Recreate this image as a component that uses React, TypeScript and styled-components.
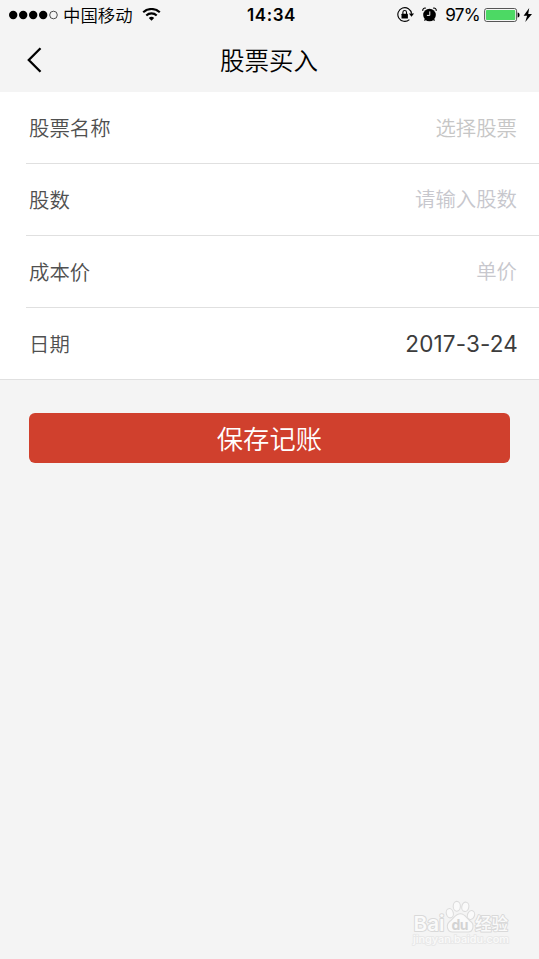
import React from "react";
import styled, { createGlobalStyle } from "styled-components";

const GlobalStyle = createGlobalStyle`
  * { box-sizing: border-box; }
  html, body { margin: 0; padding: 0; background: #f4f4f4; }
  body { font-family: Inter, "Noto Sans CJK SC", sans-serif; }
`;

const Screen = styled.main`
  position: relative;
  width: 539px;
  height: 959px;
  overflow: hidden;
  background: #f4f4f4;
`;

const StatusBar = styled.div`
  display: grid;
  grid-template-columns: 1fr auto 1fr;
  align-items: center;
  height: 30px;
  padding: 0 6px 0 9px;
  color: #000;
`;

const StatusGroup = styled.div<{ $end?: boolean }>`
  display: flex;
  align-items: center;
  height: 30px;
  justify-content: ${(p) => (p.$end ? "flex-end" : "flex-start")};
`;

const Carrier = styled.span`
  margin: 0 9px 0 4px;
  font-family: "Noto Sans CJK SC", sans-serif;
  font-size: 17.4px;
  font-weight: 350;
  line-height: 28px;
  padding-bottom: 1px;
`;

const Clock = styled.time`
  font-size: 17px;
  font-weight: 600;
  letter-spacing: 0.55px;
  line-height: 30px;
  padding-left: 1px;
`;

const Percent = styled.span`
  margin: 0 4px 0 8px;
  font-size: 17.2px;
  letter-spacing: -0.7px;
  line-height: 30px;
`;

const IconSlot = styled.span`
  display: flex;
  margin-right: 7px;
`;

const NavBar = styled.header`
  display: grid;
  grid-template-columns: 60px 1fr 60px;
  align-items: start;
  height: 62px;
`;

const BackButton = styled.button`
  display: flex;
  align-items: center;
  height: 60px;
  padding: 0 0 0 26px;
  border: 0;
  background: none;
`;

const Title = styled.h1`
  margin: 0 1px 0 0;
  font-family: "Noto Sans CJK SC", sans-serif;
  font-size: 24.5px;
  font-weight: 350;
  line-height: 60px;
  text-align: center;
  color: #000;
`;

const Form = styled.section`
  background: #fff;
  border-bottom: 1px solid #e0e0e0;
`;

const Row = styled.div`
  display: flex;
  align-items: center;
  justify-content: space-between;
  height: 72px;
  margin-left: 26px;
  padding: 0 22px 2px 3px;
  border-bottom: 1px solid #e0e0e0;
  &:last-child {
    height: 71px;
    border-bottom: 0;
  }
`;

const Label = styled.span`
  font-family: "Noto Sans CJK SC", sans-serif;
  font-size: 20.4px;
  font-weight: 350;
  line-height: 30px;
  color: #505050;
`;

const Placeholder = styled.span<{ $cool?: boolean }>`
  font-family: "Noto Sans CJK SC", sans-serif;
  font-size: 20.4px;
  font-weight: 350;
  line-height: 30px;
  padding-bottom: ${(p) => (p.$cool ? "1px" : "0")};
  color: ${(p) => (p.$cool ? "#c7c7cd" : "#c6c6c6")};
`;

const DateValue = styled.span`
  font-size: 22.5px;
  letter-spacing: 0.15px;
  line-height: 30px;
  padding-top: 2px;
  margin-right: -1px;
  color: #3c3c3c;
`;

const SaveButton = styled.button`
  display: block;
  width: 481.6px;
  height: 50px;
  margin: 33px 0 0 28.6px;
  padding: 0 0 1px;
  border: 0;
  border-radius: 6px;
  background: #d0402d;
  color: #fff;
  font-family: "Noto Sans CJK SC", sans-serif;
  font-size: 26.3px;
  font-weight: 350;
  line-height: 49px;
`;

const Watermark = styled.div`
  position: absolute;
  left: 411px;
  top: 898px;
  width: 102px;
  height: 52px;
`;

const fields = [
  { label: "股票名称", hint: "选择股票", cool: false },
  { label: "股数", hint: "请输入股数", cool: true },
  { label: "成本价", hint: "单价", cool: true },
];

const Signal = () => (
  <svg width="50" height="10" viewBox="0 0 50 10">
    {[4.2, 14.2, 24.2, 34.2].map((x) => (
      <circle key={x} cx={x} cy="5" r="4.2" />
    ))}
    <circle cx="44.5" cy="5" r="3.8" fill="none" stroke="#222" strokeWidth="0.8" />
  </svg>
);

const Wifi = () => (
  <svg width="19" height="14" viewBox="0 0 19 14" fill="none" stroke="#000" strokeWidth="2.1">
    <path d="M1.2 4.3a12 12 0 0 1 16.6 0" />
    <path d="M4.3 7.5a7.5 7.5 0 0 1 10.4 0" />
    <path d="M6.8 10.1a3.9 3.9 0 0 1 5.4 0L9.5 12.7z" fill="#000" stroke="none" />
  </svg>
);

const RotationLock = () => (
  <svg width="18" height="16" viewBox="0 0 18 16" fill="none" stroke="#000">
    <path d="M14.6 6.7A6.9 6.9 0 1 0 12.4 12.6" strokeWidth="1.1" />
    <path d="M11.9 6.4h5.2l-2.6 3.3z" fill="#000" stroke="none" />
    <rect x="4.5" y="6.8" width="6.4" height="4.8" rx="0.4" fill="#000" stroke="none" />
    <path d="M5.9 7.2V5.3a1.8 1.8 0 0 1 3.6 0v1.9" strokeWidth="1.1" />
  </svg>
);

const Alarm = () => (
  <svg width="15" height="16" viewBox="0 0 15 16">
    <circle cx="7.5" cy="8" r="6.3" />
    <path d="M0.9 3.9A2.2 2.2 0 0 1 3.9 1.2M11.1 1.2a2.2 2.2 0 0 1 3 2.7" fill="none" stroke="#000" strokeWidth="1.1" />
    <path d="M3.4 12.4l-.9 1.3M11.6 12.4l.9 1.3" stroke="#000" strokeWidth="1.3" />
    <path d="M7.8 4.4v4H4.9" fill="none" stroke="#f4f4f4" strokeWidth="1" />
  </svg>
);

const Battery = () => (
  <svg width="49" height="16" viewBox="0 0 49 16">
    <rect x="0.6" y="1.5" width="32" height="13" rx="2.2" fill="#f4f4f4" stroke="#444" strokeWidth="0.9" />
    <rect x="2" y="2.9" width="29.2" height="10.2" rx="0.8" fill="#4cd964" />
    <path d="M33.6 5.5c2.6.2 2.6 4.8 0 5z" />
    <path d="M45.2 1L39.6 8.7h3.5L41.3 15l6.7-8h-3.8z" />
  </svg>
);

const PawLogo = () => (
  <svg width="102" height="52" viewBox="0 0 102 52" fontFamily="Inter, 'Noto Sans CJK SC', sans-serif">
    <g fill="#fafafa" stroke="#dcdcdc" strokeWidth="1.1">
      <ellipse cx="38.8" cy="15.2" rx="3.5" ry="4.7" transform="rotate(-15 38.8 15.2)" />
      <ellipse cx="45.8" cy="8.3" rx="3.6" ry="4.9" />
      <ellipse cx="54.3" cy="8.8" rx="3.5" ry="4.7" transform="rotate(12 54.3 8.8)" />
      <ellipse cx="60" cy="17" rx="3.5" ry="4.6" transform="rotate(20 60 17)" />
      <path d="M49.5 15.8c4.6 0 6.5 4.8 10.5 8 3.2 2.6 2.8 10.2-3 10.2H41.6c-6 0-6.6-7.4-3-10.5 4.4-3.5 6-7.7 10.9-7.7z" />
    </g>
    <g fill="#fafafa" stroke="#d9d9d9" strokeWidth="1.9" paintOrder="stroke" strokeLinejoin="round">
      <text x="2.5" y="32.5" fontSize="20.5" fontWeight="600" textLength="31" lengthAdjust="spacingAndGlyphs">Bai</text>
      <text x="64" y="31.5" fontFamily="'Noto Sans CJK SC', sans-serif" fontSize="16.5" fontWeight="500">经验</text>
      <text x="2" y="45" fontSize="11" fontWeight="500" textLength="96" lengthAdjust="spacingAndGlyphs" stroke="#e8e8e8">jingyan.baidu.com</text>
    </g>
    <text x="40.5" y="31.5" fontSize="14" fontWeight="700" fill="#d3d3d3" textLength="17">du</text>
  </svg>
);

export default function App() {
  return (
    <Screen>
      <GlobalStyle />
      <StatusBar>
        <StatusGroup>
          <Signal />
          <Carrier>中国移动</Carrier>
          <Wifi />
        </StatusGroup>
        <Clock>14:34</Clock>
        <StatusGroup $end>
          <IconSlot><RotationLock /></IconSlot>
          <Alarm />
          <Percent>97%</Percent>
          <Battery />
        </StatusGroup>
      </StatusBar>
      <NavBar>
        <BackButton aria-label="返回">
          <svg width="17" height="26" viewBox="0 0 17 26" fill="none" stroke="#000" strokeWidth="2.3">
            <path d="M14.5 1.2L2.8 13l11.7 11.8" />
          </svg>
        </BackButton>
        <Title>股票买入</Title>
      </NavBar>
      <Form>
        {fields.map((f) => (
          <Row key={f.label}>
            <Label>{f.label}</Label>
            <Placeholder $cool={f.cool}>{f.hint}</Placeholder>
          </Row>
        ))}
        <Row>
          <Label>日期</Label>
          <DateValue>2017-3-24</DateValue>
        </Row>
      </Form>
      <SaveButton>保存记账</SaveButton>
      <Watermark>
        <PawLogo />
      </Watermark>
    </Screen>
  );
}
